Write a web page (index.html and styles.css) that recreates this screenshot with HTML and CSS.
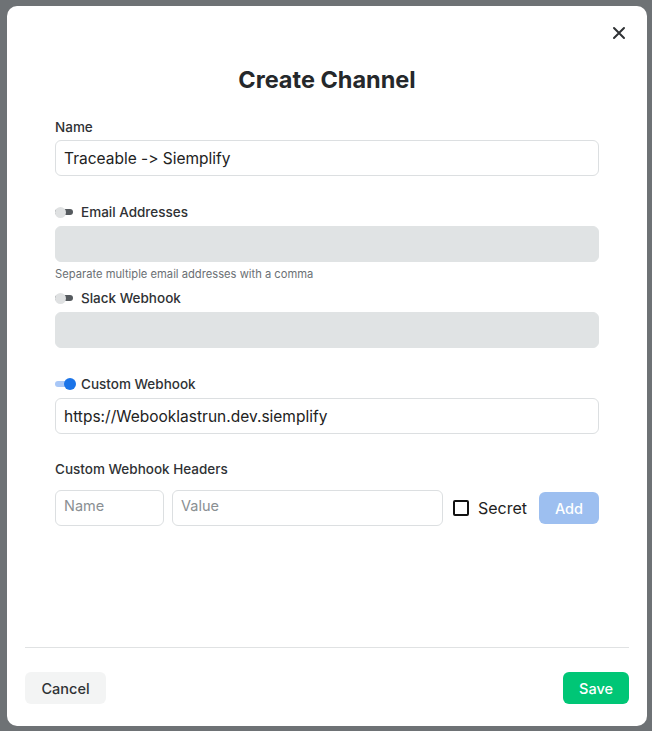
FILE: index.html
```html
<!DOCTYPE html>
<html lang="en">
<head>
    <meta charset="UTF-8">
    <meta name="viewport" content="width=device-width, initial-scale=1.0">
    <title>Create Channel</title>
    <link rel="stylesheet" href="styles.css">
</head>
<body>
    <div class="overlay">
        <div class="modal">
            <div class="modal-top">
                <button class="close-button" aria-label="Close">
                    <svg width="14" height="14" viewBox="0 0 14 14">
                        <path d="M2 2 L12 12 M12 2 L2 12" stroke="#2f3235" stroke-width="2" stroke-linecap="round"/>
                    </svg>
                </button>
            </div>

            <h1 class="modal-title">Create Channel</h1>

            <div class="modal-body">
                <label class="field-label" for="channel-name">Name</label>
                <input class="text-input" type="text" id="channel-name" value="Traceable -> Siemplify">

                <!-- Email -->
                <div class="toggle-row first">
                    <span class="toggle"></span>
                    <span class="toggle-label">Email Addresses</span>
                </div>
                <input class="text-input disabled" type="text" disabled>
                <div class="hint">Separate multiple email addresses with a comma</div>

                <!-- Slack -->
                <div class="toggle-row slack">
                    <span class="toggle"></span>
                    <span class="toggle-label">Slack Webhook</span>
                </div>
                <input class="text-input disabled" type="text" disabled>

                <!-- Custom webhook -->
                <div class="toggle-row first">
                    <span class="toggle on"></span>
                    <span class="toggle-label">Custom Webhook</span>
                </div>
                <input class="text-input" type="text" value="https://Webooklastrun.dev.siemplify">

                <div class="field-label headers-label">Custom Webhook Headers</div>
                <div class="header-row">
                    <input class="text-input header-name" type="text" placeholder="Name">
                    <input class="text-input header-value" type="text" placeholder="Value">
                    <label class="secret">
                        <span class="checkbox"></span>
                        Secret
                    </label>
                    <button class="add-button">Add</button>
                </div>
            </div>

            <div class="modal-footer">
                <button class="cancel-button">Cancel</button>
                <button class="save-button">Save</button>
            </div>
        </div>
    </div>
</body>
</html>
```

FILE: styles.css
```css
body {
    margin: 0;
    font-family: Inter, "Open Sans", sans-serif;
    font-feature-settings: "calt" 0;
    background-color: #6e7275;
}
.overlay {
    height: 731px;
    padding: 6px 5px 5px 7px;
    box-sizing: border-box;
}
.modal {
    height: 720px;
    background-color: #fff;
    border-radius: 10px;
    display: flex;
    flex-direction: column;
}
.modal-top {
    display: flex;
    justify-content: flex-end;
    padding: 15px 16px 0 0;
}
.close-button {
    width: 24px;
    height: 24px;
    border: none;
    background: none;
    padding: 0;
    display: flex;
    align-items: center;
    justify-content: center;
    cursor: pointer;
}
.modal-title {
    margin: 20px 0 0;
    text-align: center;
    font-size: 23.5px;
    line-height: 30px;
    font-weight: 700;
    color: #25282b;
}
.modal-body {
    flex: 1;
    padding: 22px 48px 0;
    display: flex;
    flex-direction: column;
}
.field-label {
    font-size: 13.5px;
    line-height: 20px;
    font-weight: 500;
    color: #2f3235;
    margin-bottom: 3px;
}
.text-input {
    height: 36px;
    box-sizing: border-box;
    border: 1px solid #dcdfe1;
    border-radius: 6px;
    padding: 0 8px;
    font-family: Inter, "Open Sans", sans-serif;
    font-feature-settings: "calt" 0;
    font-size: 15.5px;
    color: #222;
    background: #fff;
    outline: none;
}
.text-input::placeholder {
    color: #8a8f93;
    font-size: 14.5px;
}
.text-input.disabled {
    background-color: #e0e3e4;
    border-color: #e0e3e4;
}
.toggle-row {
    display: flex;
    align-items: center;
    height: 20px;
    margin-bottom: 4px;
}
.toggle-row.first {
    margin-top: 26px;
}
.toggle-row.slack {
    margin-top: 7px;
}
.toggle {
    position: relative;
    width: 18px;
    height: 6px;
    border-radius: 3px;
    background-color: #555a5e;
    margin-right: 8px;
}
.toggle::after {
    content: "";
    position: absolute;
    left: 0;
    top: -2.5px;
    width: 11px;
    height: 11px;
    border-radius: 50%;
    background-color: #dfe1e2;
}
.toggle.on {
    background-color: #a8c7f7;
}
.toggle.on::after {
    left: auto;
    right: -3px;
    width: 12px;
    height: 12px;
    top: -3px;
    background-color: #1b74e8;
}
.toggle-label {
    font-size: 13.5px;
    font-weight: 500;
    color: #2f3235;
}
.hint {
    font-size: 11.2px;
    line-height: 14px;
    color: #6b7074;
    margin-top: 5px;
}
.headers-label {
    margin-top: 25px;
    margin-bottom: 11px;
}
.header-row {
    display: flex;
    align-items: center;
}
.header-name {
    width: 109px;
    padding-bottom: 6px;
}
.header-value {
    width: 271px;
    margin-left: 8px;
    padding-bottom: 6px;
}
.secret {
    display: flex;
    align-items: center;
    margin-left: 10px;
    font-size: 16px;
    color: #222;
}
.checkbox {
    width: 12px;
    height: 12px;
    border: 2px solid #111;
    border-radius: 2px;
    margin-right: 9px;
}
.add-button {
    margin-left: auto;
    height: 32px;
    width: 60px;
    border: none;
    border-radius: 6px;
    background-color: #9dbff0;
    color: #fff;
    font-family: Inter, "Open Sans", sans-serif;
    font-size: 14.5px;
    font-weight: 500;
}
.modal-footer {
    margin: 0 18px;
    padding: 24px 0 22px;
    border-top: 1px solid #e0e2e3;
    display: flex;
    justify-content: space-between;
}
.cancel-button, .save-button {
    height: 32px;
    border: none;
    border-radius: 6px;
    font-family: Inter, "Open Sans", sans-serif;
    font-size: 14.5px;
    font-weight: 500;
    cursor: pointer;
}
.cancel-button {
    width: 81px;
    background-color: #f3f4f4;
    color: #2f3235;
}
.save-button {
    width: 66px;
    background-color: #00c676;
    color: #fff;
}
```
